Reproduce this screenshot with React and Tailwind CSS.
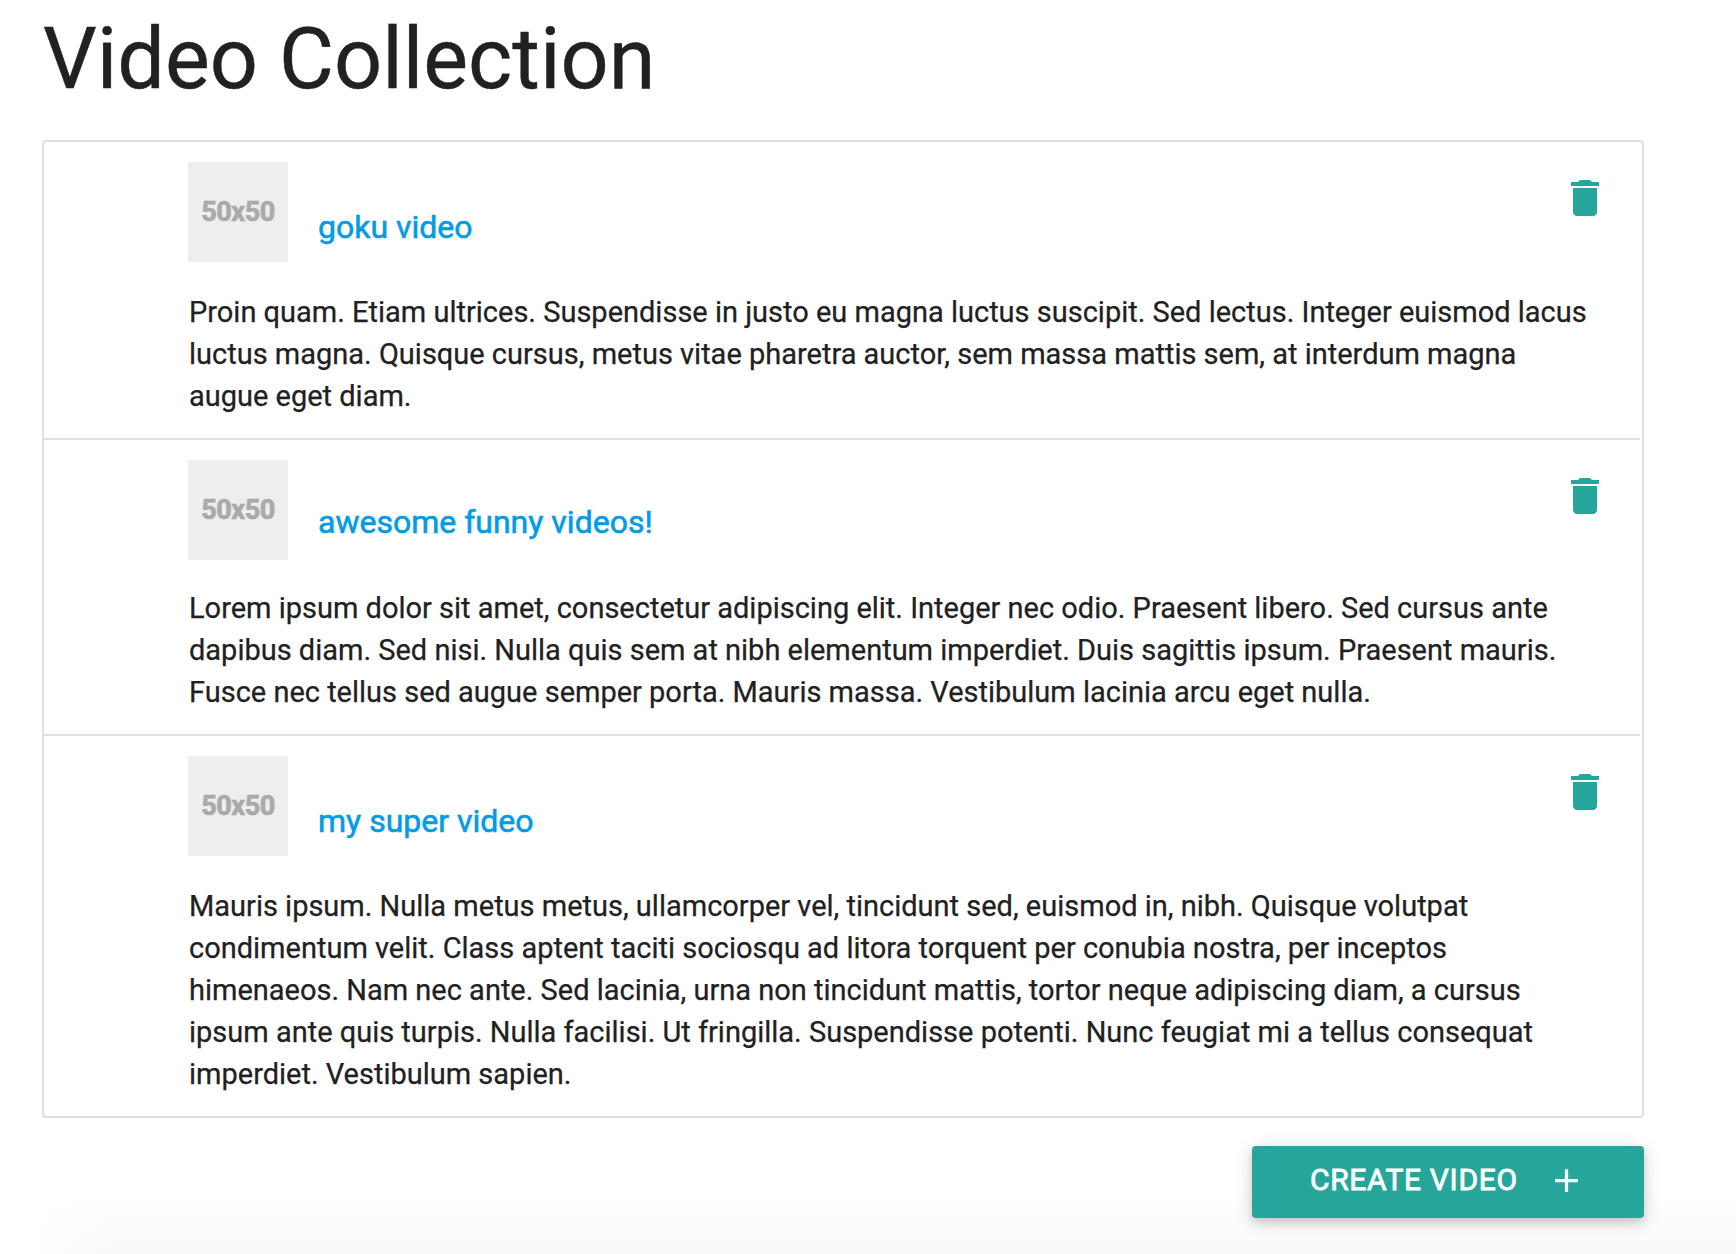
const videos = [
  {
    title: 'goku video',
    height: 'h-[298px]',
    titleTop: 'mt-[45px]',
    textTop: 'mt-[29px]',
    lines: [
      'Proin quam. Etiam ultrices. Suspendisse in justo eu magna luctus suscipit. Sed lectus. Integer euismod lacus',
      'luctus magna. Quisque cursus, metus vitae pharetra auctor, sem massa mattis sem, at interdum magna',
      'augue eget diam.',
    ],
  },
  {
    title: 'awesome funny videos!',
    height: 'h-[296px]',
    titleTop: 'mt-[42px]',
    textTop: 'mt-[27px]',
    lines: [
      'Lorem ipsum dolor sit amet, consectetur adipiscing elit. Integer nec odio. Praesent libero. Sed cursus ante',
      'dapibus diam. Sed nisi. Nulla quis sem at nibh elementum imperdiet. Duis sagittis ipsum. Praesent mauris.',
      'Fusce nec tellus sed augue semper porta. Mauris massa. Vestibulum lacinia arcu eget nulla.',
    ],
  },
  {
    title: 'my super video',
    height: 'h-[380px]',
    titleTop: 'mt-[45px]',
    textTop: 'mt-[29px]',
    lines: [
      'Mauris ipsum. Nulla metus metus, ullamcorper vel, tincidunt sed, euismod in, nibh. Quisque volutpat',
      'condimentum velit. Class aptent taciti sociosqu ad litora torquent per conubia nostra, per inceptos',
      'himenaeos. Nam nec ante. Sed lacinia, urna non tincidunt mattis, tortor neque adipiscing diam, a cursus',
      'ipsum ante quis turpis. Nulla facilisi. Ut fringilla. Suspendisse potenti. Nunc feugiat mi a tellus consequat',
      'imperdiet. Vestibulum sapien.',
    ],
  },
];

function TrashIcon() {
  return (
    <svg viewBox="0 0 24 24" className="size-12" fill="currentColor">
      <path d="M6 19c0 1.1.9 2 2 2h8c1.1 0 2-.9 2-2V7H6v12zM19 4h-3.5l-1-1h-5l-1 1H5v2h14V4z" />
    </svg>
  );
}

function VideoItem({ video, last }) {
  return (
    <li className={`flex ${video.height} pl-[144px] pt-5 mr-0.5 ${last ? '' : 'border-b-2 border-[#e0e0e0]'}`}>
      <div className="w-[1373px]">
        <div className="flex h-[100px]">
          <div className="flex size-[100px] items-center justify-center bg-[#eee] text-[27px] font-bold leading-none tracking-[-0.4px] text-[#aaa] [-webkit-text-stroke:0.7px_#aaa]">
            50x50
          </div>
          <a href="#" className={`${video.titleTop} ml-[30px] text-[32px] leading-[40px] text-[#039be5] [-webkit-text-stroke:0.6px_#039be5]`}>
            {video.title}
          </a>
        </div>
        <p className={`${video.textTop} whitespace-pre pl-px text-[29px] leading-[42px] tracking-[-0.005px] [-webkit-text-stroke:0.25px_#212121]`}>
          {video.lines.join('\n')}
        </p>
      </div>
      <button className="mt-3 size-12 text-[#26a69a]" aria-label="Delete">
        <TrashIcon />
      </button>
    </li>
  );
}

export default function App() {
  return (
    <div className="flex h-[1254px] w-[1736px] flex-col overflow-hidden bg-white font-['Roboto',sans-serif] text-[#212121]">
      <h1 className="h-[140px] pl-[43px] pt-[10px] text-[84.5px] leading-[100px] [-webkit-text-stroke:0.4px_#212121]">Video Collection</h1>
      <ul className="ml-[42px] h-[978px] w-[1602px] shrink-0 rounded-[4px] border-2 border-[#e0e0e0]">
        {videos.map((v, i) => (
          <VideoItem key={v.title} video={v} last={i === videos.length - 1} />
        ))}
      </ul>
      <div className="h-[136px] shrink-0 bg-[linear-gradient(to_right,white_30px,transparent_120px),linear-gradient(to_bottom,transparent_55%,rgba(0,0,0,0.025))] pt-7">
        <button className="ml-[1252px] flex h-[72px] w-[392px] items-center rounded-[4px] bg-[#26a69a] pl-[58px] text-[30px] tracking-[0.67px] text-white shadow-[0_4px_10px_0_rgba(0,0,0,0.16),0_4px_20px_0_rgba(0,0,0,0.12)]">
          <span className="-mt-1 w-[237px] text-left leading-[40px] [-webkit-text-stroke:0.8px_white]">CREATE VIDEO</span>
          <svg viewBox="0 0 24 24" className="-mt-1 size-[39px]" fill="currentColor">
            <path d="M19 13h-6v6h-2v-6H5v-2h6V5h2v6h6v2z" />
          </svg>
        </button>
      </div>
    </div>
  );
}
